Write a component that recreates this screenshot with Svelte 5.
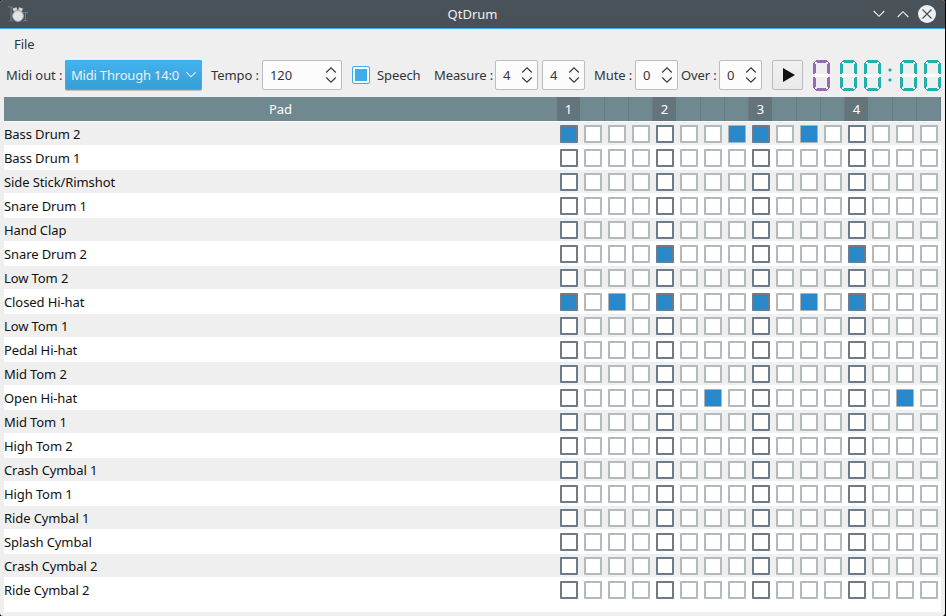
<script>
  const pads = ['Bass Drum 2', 'Bass Drum 1', 'Side Stick/Rimshot', 'Snare Drum 1', 'Hand Clap', 'Snare Drum 2', 'Low Tom 2', 'Closed Hi-hat', 'Low Tom 1', 'Pedal Hi-hat', 'Mid Tom 2', 'Open Hi-hat', 'Mid Tom 1', 'High Tom 2', 'Crash Cymbal 1', 'High Tom 1', 'Ride Cymbal 1', 'Splash Cymbal', 'Crash Cymbal 2', 'Ride Cymbal 2'];
  const steps = Array.from({ length: 16 }, (_, i) => i);
  let hits = $state({ 0: [0, 7, 8, 10], 5: [4, 12], 7: [0, 2, 4, 8, 10, 12], 11: [6, 14] });
  function toggle(r, c) {
    const row = hits[r] ?? [];
    hits[r] = row.includes(c) ? row.filter((x) => x !== c) : [...row, c];
  }
</script>

{#snippet spin(value, wide)}
  <div class="spin" class:wide>
    <span>{value}</span>
    <svg width="12" height="18" viewBox="0 0 12 18"><path d="M1.2 6.5 6 1.8l4.8 4.7M1.2 11.5 6 16.2l4.8-4.7" /></svg>
  </div>
{/snippet}

{#snippet digit()}
  <svg class="digit" width="17" height="31" viewBox="0 0 17 31" shape-rendering="crispEdges">
    <path class="mid" d="M2 14h13v3H2z" />
    <path d="M3 0h11v1H3zM2 1h13v1H2zM4 2h9v1H4zM3 30h11v1H3zM2 29h13v1H2zM4 28h9v1H4z" />
    <path d="M0 3h1v11H0zM1 2h1v12H1zM2 4h1v9H2zM16 3h1v11h-1zM15 2h1v12h-1zM14 4h1v9h-1z" />
    <path d="M0 17h1v11H0zM1 17h1v12H1zM2 18h1v9H2zM16 17h1v11h-1zM15 17h1v12h-1zM14 18h1v9h-1z" />
  </svg>
{/snippet}

<div class="window">
  <header>
    <svg class="logo" width="20" height="18" viewBox="0 0 20 18">
      <path d="M0 1.5l5 1M3 2v14M1 16.5l2-2 2 2M15 7.5h5M17.5 8v8M15.5 16.5l2-2 2 2" fill="none" stroke="#757c81" />
      <path d="M4.5 3.5l4-1.2 1 3-3.5 1.5zM11 2.3l4 1.2-1.3 3.2-3.4-1.4z" fill="#d0d2d3" />
      <circle cx="10" cy="11" r="5.4" fill="#e3e3e3" stroke="#a6aaad" />
    </svg>
    <h1>QtDrum</h1>
    <div class="controls">
      <svg width="12" height="8" viewBox="0 0 12 8"><path d="M.7 1 6 6.3 11.3 1" /></svg>
      <svg width="12" height="8" viewBox="0 0 12 8"><path d="M.7 7 6 1.7 11.3 7" /></svg>
      <svg width="18" height="18" viewBox="0 0 18 18"><circle cx="9" cy="9" r="9" /><path class="x" d="M4.5 4.5l9 9m0-9l-9 9" /></svg>
    </div>
  </header>
  <nav>File</nav>
  <div class="toolbar">
    <label style:width="59px">Midi out :</label>
    <div class="combo">Midi Through 14:0
      <svg width="12" height="8" viewBox="0 0 12 8"><path d="M1.3 1.2 6 5.8l4.7-4.6" /></svg>
    </div>
    <label style:width="51px" style:margin-left="9px">Tempo :</label>
    {@render spin(120, true)}
    <div class="speech"><i></i></div>
    <label style:width="57px">Speech</label>
    <label style:width="61px">Measure :</label>
    {@render spin(4)}
    <div class="gap"></div>
    {@render spin(4)}
    <label style:width="41px" style:margin-left="9px">Mute :</label>
    {@render spin(0)}
    <label style:width="38px" style:margin-left="3px">Over :</label>
    {@render spin(0)}
    <button class="play" aria-label="Play"><svg width="12" height="14" viewBox="0 0 12 14"><path d="M0 0l12 7-12 7z" /></svg></button>
    <div class="lcd violet">{@render digit()}</div>
    <div class="lcd teal">
      {@render digit()}{@render digit()}
      <svg class="colon" width="4" height="14" viewBox="0 0 4 14"><path d="M0 2l2-2 2 2-2 2zM0 12l2-2 2 2-2 2z" /></svg>
      {@render digit()}{@render digit()}
    </div>
  </div>
  <main>
    <div class="row head">
      <div class="name">Pad</div>
      {#each steps as s}
        <div class="cell" class:beat={s % 4 === 0}>{s % 4 === 0 ? s / 4 + 1 : ''}</div>
      {/each}
    </div>
    {#each pads as pad, r}
      <div class="row" class:even={r % 2 === 0}>
        <div class="name">{pad}</div>
        {#each steps as s}
          <div class="cell">
            <button aria-label="{pad} {s + 1}" class="box" class:strong={s % 4 === 0} class:on={hits[r]?.includes(s)} onclick={() => toggle(r, s)}></button>
          </div>
        {/each}
      </div>
    {/each}
  </main>
</div>

<style>
  :global(body) { margin: 0; background: #000; overflow: hidden; }
  .window { box-sizing: border-box; width: 945px; height: 616px; background: #efefef; border-radius: 3px; overflow: hidden; font: 13px/18px "Noto Sans", sans-serif; letter-spacing: -0.1px; color: #31363b; display: flex; flex-direction: column; }
  header { height: 28px; flex: none; background: linear-gradient(#4b535a, #475057); border-bottom: 1px solid #3daee9; display: flex; align-items: center; color: #eff0f1; }
  .logo { margin-left: 8px; width: 20px; }
  h1 { flex: 1; margin: 0 0 0 47px; font: inherit; letter-spacing: 0; text-align: center; }
  .controls { display: flex; align-items: center; justify-content: flex-end; gap: 12px; padding-right: 9px; width: 66px; }
  .controls svg { flex: none; }
  .controls path { fill: none; stroke: #eff0f1; stroke-width: 1.1; }
  .controls circle { fill: #eff0f1; }
  .controls .x { stroke: #475057; stroke-width: 1.2; }
  .controls svg:last-child { margin-left: -3px; }
  nav { height: 31px; flex: none; box-sizing: border-box; padding: 6px 14px; }
  .toolbar { height: 30px; flex: none; display: flex; align-items: center; padding-left: 6px; margin-bottom: 7px; }
  .toolbar > * { flex: none; white-space: nowrap; }
  label, .combo, .spin { line-height: 30px; }
  .combo { width: 137px; box-sizing: border-box; height: 30px; padding: 0 5px 0 6px; color: #eff0f1; background: linear-gradient(#41b4ef, #389dd5); border-radius: 2px; display: flex; align-items: center; justify-content: space-between; box-shadow: inset 0 0 0 1px #3daee9, 0 1px #bec0c1; letter-spacing: -0.2px; }
  .combo path { fill: none; stroke: #eff0f1; stroke-width: 1.1; }
  .spin { box-sizing: border-box; width: 43px; height: 30px; border: 1px solid #babcbe; border-radius: 2px; background: #fcfcfc; display: flex; align-items: center; justify-content: space-between; padding: 0 4px 0 7px; }
  .spin.wide { width: 80px; }
  .spin path { fill: none; stroke: #31363b; stroke-width: 1.1; }
  .speech { width: 14px; height: 14px; border: 1px solid #3daee9; border-radius: 2px; padding: 1px; background: #fcfcfc; display: flex; align-items: center; justify-content: center; margin: 0 7px 0 10px; }
  .speech i { width: 12px; height: 12px; background: #3daee9; }
  .gap { width: 4px; }
  .play { width: 31px; height: 30px; box-sizing: border-box; border: 1px solid #b9bbbd; border-radius: 2px; background: linear-gradient(#f1f1f2, #e8e9ea); padding: 0 0 0 3px; margin-left: 10px; display: flex; align-items: center; justify-content: center; }
  .play path { fill: #111; }
  .lcd { display: flex; align-items: flex-start; align-self: flex-start; }
  .lcd svg { fill: currentColor; margin-right: 7px; }
  .violet { color: #9868b9; margin: 0 3px 0 10px; }
  .teal { color: #20b2aa; }
  .lcd .mid { fill: #fff; }
  .lcd .colon { margin: 8px 8px 0 0; }
  main { flex: none; height: 515px; width: 937px; margin-left: 4px; background: #fff; }
  .row { display: flex; height: 24px; color: #111; background: #fff; align-items: stretch; }
  .even { background: linear-gradient(#efefef 23px, #fff 23px); }
  .name { width: 553px; line-height: 25px; flex: none; }
  .cell { width: 24px; box-sizing: border-box; flex: none; display: flex; align-items: center; justify-content: center; }
  .head { background: #708890; color: #fff; margin-bottom: 1px; }
  .head .name { text-align: center; }
  .head .cell { border-right: 1px solid #677d84; }
  .head .beat { background: #63757b; border-right-color: #708890; }
  .box { width: 18px; height: 18px; box-sizing: border-box; padding: 0; margin: 0; border: 2px solid #b1babd; border-radius: 1px; background: #fff; }
  .strong { border-color: #6b7b87; }
  .on { background: #2a88c9; }
  .on:not(.strong) { border-color: #aab4b8; border-width: 1px; }
</style>
